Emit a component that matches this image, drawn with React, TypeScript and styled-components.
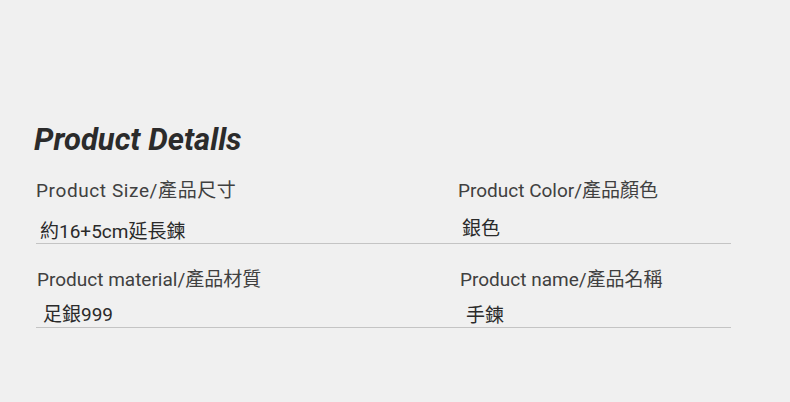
import React, {FC} from "react";
import styled, {createGlobalStyle} from "styled-components";

const GlobalStyle = createGlobalStyle`
  html, body {
    margin: 0;
    padding: 0;
    background: #f0f0f0;
  }
  body {
    font-family: Roboto, "Noto Sans CJK TC", sans-serif;
  }
`

const Page = styled.div`
  width: 790px;
  height: 402px;
  box-sizing: border-box;
  padding: 123px 0 0 34px;
  background: #f0f0f0;
`

const Title = styled.h2`
  margin: 0 0 21px 0;
  font-size: 31px;
  font-weight: 700;
  font-style: italic;
  color: #2b2b2b;
  line-height: 34px;
`

const Grid = styled.div`
  display: grid;
  grid-template-columns: 422px 273px;
  margin-left: 2px;
  row-gap: 23px;
`

const Cell = styled.div<{ $shift: number }>`
  display: flex;
  flex-direction: column;
  border-bottom: 1px solid #c4c4c4;
  padding-left: ${p => p.$shift}px;
`

const Label = styled.div<{ $spacing: number }>`
  font-size: 19px;
  line-height: 26px;
  color: #404040;
  letter-spacing: ${p => p.$spacing}px;
`

const Value = styled.div<{ $indent: number; $top: number }>`
  font-size: 19px;
  line-height: 22px;
  color: #2a2a2a;
  padding: ${p => p.$top}px 0 0 ${p => p.$indent}px;
`

const items = [
    {label: "Product Size/產品尺寸", value: "約16+5cm延長鍊", indent: 4, top: 17, shift: 0, spacing: 0.6},
    {label: "Product Color/產品顏色", value: "銀色", indent: 4, top: 14, shift: 0, spacing: 0},
    {label: "Product material/產品材質", value: "足銀999", indent: 6, top: 11, shift: 1, spacing: 0},
    {label: "Product name/產品名稱", value: "手鍊", indent: 6, top: 12, shift: 2, spacing: 0},
]

const App: FC = () => {
    return (
        <React.Fragment>
            <GlobalStyle/>
            <Page>
                <Title>Product Detalls</Title>
                <Grid>
                    {items.map(it => (
                        <Cell key={it.label} $shift={it.shift}>
                            <Label $spacing={it.spacing}>{it.label}</Label>
                            <Value $indent={it.indent} $top={it.top}>{it.value}</Value>
                        </Cell>
                    ))}
                </Grid>
            </Page>
        </React.Fragment>
    )
}

export default App;
